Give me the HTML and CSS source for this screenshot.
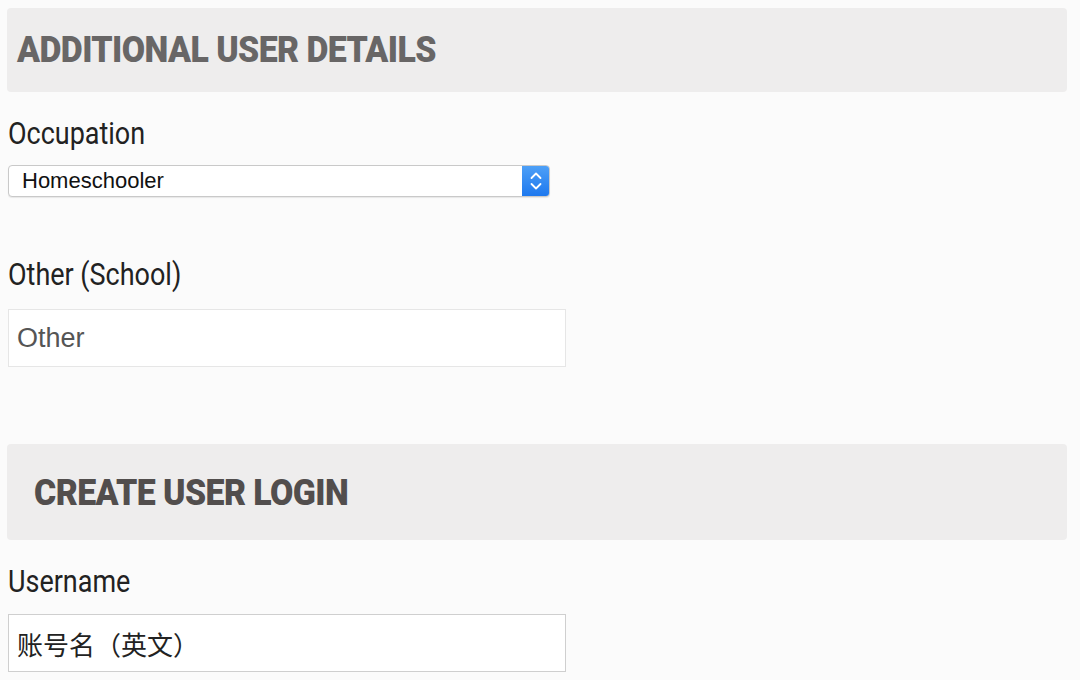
FILE: index.html
```html
<!DOCTYPE html>
<html lang="en">
<head>
  <meta charset="UTF-8">
  <title>User Details</title>
  <link rel="stylesheet" href="styles.css">
</head>
<body>

  <!-- Additional details -->
  <div class="section-head">
    <h2>ADDITIONAL USER DETAILS</h2>
  </div>

  <div class="field">
    <label>Occupation</label>
    <div class="select">
      <span>Homeschooler</span>
      <div class="select-btn">
        <svg width="14" height="22" viewBox="0 0 14 22">
          <path d="M2.5 8 L7 3.5 L11.5 8 M2.5 14 L7 18.5 L11.5 14" fill="none" stroke="#fff" stroke-width="1.8" stroke-linecap="round" stroke-linejoin="round"/>
        </svg>
      </div>
    </div>
  </div>

  <div class="field field-other">
    <label>Other (School)</label>
    <input type="text" class="text-input light" placeholder="Other">
  </div>

  <!-- Login -->
  <div class="section-head second">
    <h2>CREATE USER LOGIN</h2>
  </div>

  <div class="field field-user">
    <label>Username</label>
    <input type="text" class="text-input" value="账号名（英文）">
  </div>

</body>
</html>
```

FILE: styles.css
```css
* {
  margin: 0;
  padding: 0;
  box-sizing: border-box;
}

body {
  background-color: #fbfbfb;
  font-family: Roboto, "Noto Sans CJK SC", sans-serif;
  color: #222;
  padding: 8px 13px 0 7px;
  width: 1080px;
}

.section-head {
  background-color: #eeeded;
  border-radius: 4px;
  height: 84px;
  display: flex;
  align-items: center;
  padding-left: 10px;
}

.section-head h2 {
  font-family: Roboto, sans-serif;
  font-weight: 900;
  font-size: 36px;
  line-height: 40px;
  letter-spacing: -0.6px;
  transform: scaleX(0.94);
  transform-origin: left center;
  color: #686666;
}

.section-head.second {
  height: 96px;
  margin-top: 77px;
  padding-left: 27px;
}

.section-head.second h2 {
  color: #524e4d;
  padding-top: 2px;
}

.field {
  padding-left: 1px;
}

.field label {
  display: block;
  font-size: 31px;
  line-height: 32px;
  color: #222;
  transform: scaleX(0.87);
  transform-origin: left center;
  margin-top: 26px;
  margin-bottom: 15px;
}

.field-other label {
  margin-top: 62px;
  margin-bottom: 18px;
}

.field-user label {
  margin-top: 26px;
  margin-bottom: 16px;
}

.select {
  width: 542px;
  height: 32px;
  border: 1px solid #c9c9c9;
  border-radius: 4px;
  background-color: #fff;
  display: flex;
  align-items: center;
  justify-content: space-between;
  box-shadow: 0 1px 1px rgba(0, 0, 0, 0.08);
  overflow: hidden;
}

.select span {
  font-family: "Liberation Sans", sans-serif;
  font-size: 22px;
  color: #111;
  padding-left: 13px;
}

.select-btn {
  width: 28px;
  height: 32px;
  margin: -1px -1px -1px 0;
  background: linear-gradient(#4fa1f7, #1c77ee);
  border-radius: 0 4px 4px 0;
  display: flex;
  align-items: center;
  justify-content: center;
}

.text-input {
  display: block;
  width: 558px;
  height: 58px;
  border: 1px solid #cfcfcf;
  background-color: #fff;
  font-family: "Liberation Sans", "Noto Sans CJK SC", sans-serif;
  font-size: 26px;
  color: #222;
  padding: 0 8px;
  outline: none;
}

.text-input.light {
  border-color: #e6e6e6;
  font-size: 27px;
}

.text-input::placeholder {
  color: #555;
}
```
